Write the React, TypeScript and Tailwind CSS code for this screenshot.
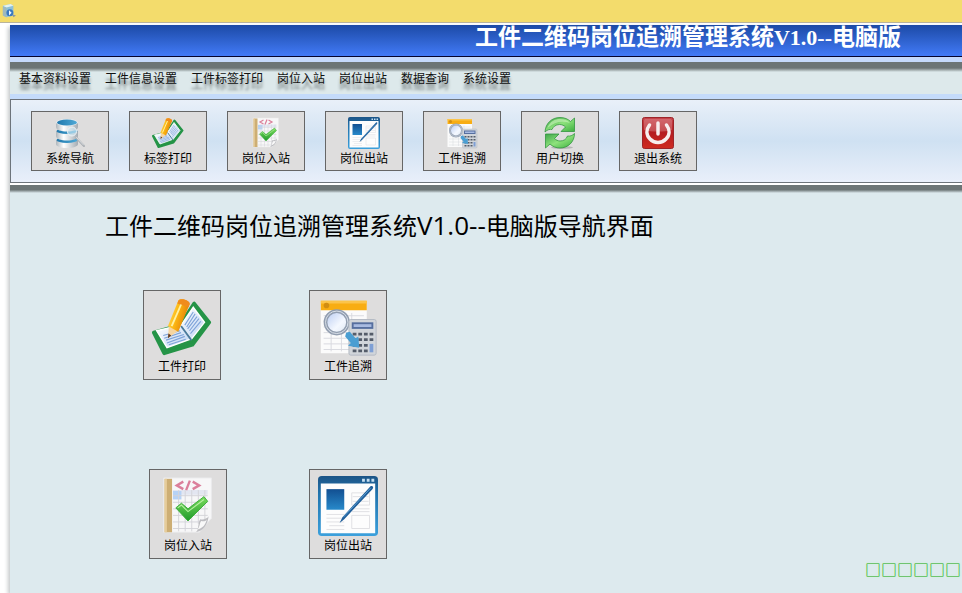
type IconProps = { className?: string };

function DatabaseIcon({ className }: IconProps) {
  return (
    <svg viewBox="0 0 64 64" className={className} aria-hidden="true">
      <defs>
        <linearGradient id="dbBody" x1="0" x2="1">
          <stop offset="0" stopColor="#aeb6bc" />
          <stop offset="0.35" stopColor="#ffffff" />
          <stop offset="1" stopColor="#a3abb2" />
        </linearGradient>
        <linearGradient id="dbTop" x1="0" x2="1">
          <stop offset="0" stopColor="#1f78ad" />
          <stop offset="1" stopColor="#4fa9d6" />
        </linearGradient>
      </defs>
      <path d="M4 46v8c0 5 10 8 22 8s22-3 22-8v-8z" fill="url(#dbBody)" />
      <ellipse cx="26" cy="46" rx="21" ry="6" fill="url(#dbTop)" />
      <path d="M4 28v10c0 6 10 9 22 9s22-3 22-9V28z" fill="url(#dbBody)" />
      <ellipse cx="26" cy="28" rx="21" ry="6" fill="url(#dbTop)" />
      <path d="M4 11v9c0 6 10 9 22 9s22-3 22-9v-9z" fill="url(#dbBody)" />
      <ellipse cx="26" cy="11" rx="22" ry="7" fill="#e8eef2" />
      <ellipse cx="26" cy="11" rx="20" ry="6" fill="url(#dbTop)" />
      <circle cx="36" cy="29" r="9" fill="#cfe8f4" fillOpacity="0.6" stroke="#eef3f6" strokeWidth="2" />
      <path d="M45 42l15 16" stroke="#a9aeb3" strokeWidth="4" strokeLinecap="round" />
      <path d="M45 41l14 15" stroke="#eceff1" strokeWidth="1.5" strokeLinecap="round" />
    </svg>
  );
}

function NotebookIcon({ className }: IconProps) {
  return (
    <svg viewBox="0 0 64 64" className={className} aria-hidden="true">
      <defs>
        <linearGradient id="pencil" x1="0" x2="1" y1="0" y2="0.4">
          <stop offset="0" stopColor="#ffe46a" />
          <stop offset="0.5" stopColor="#fdb913" />
          <stop offset="1" stopColor="#e07b06" />
        </linearGradient>
        <linearGradient id="page" x1="0" x2="1" y1="0" y2="1">
          <stop offset="0" stopColor="#ffffff" />
          <stop offset="1" stopColor="#bcd3f2" />
        </linearGradient>
      </defs>
      <path d="M2 38l11 22 30-9 18-24L45 7 30 30z" fill="#259447" stroke="#259447" strokeWidth="4" strokeLinejoin="round" />
      <path d="M5 36l26-6 10 15-25 9z" fill="url(#page)" stroke="#fff" strokeWidth="1.5" />
      <path d="M31 30L44 11l12 16-14 18z" fill="url(#page)" stroke="#fff" strokeWidth="1.5" />
      <g stroke="#7ea3d9" strokeWidth="1.2">
        <path d="M12 41l18-5M13 44l18-6M15 46l19-6M16 49l19-7M18 51l18-6" />
        <path d="M35 30l9-14M37 32l9-14M38 34l10-13M40 36l10-13M41 39l11-13" />
      </g>
      <path d="M31 31l11 15" stroke="#4a7a9c" strokeWidth="2" />
      <path d="M17 44l1-13 10 5z" fill="#f6d5a0" />
      <path d="M17 44l.5-5 3 2z" fill="#5b3520" />
      <path d="M17 31L28 4c2-4 13 0 12 4L28 37z" fill="url(#pencil)" />
      <path d="M28 4c3-4 14 0 12 4l-1 3-12-4z" fill="#f08c1c" />
      <path d="M21 31L31 8" stroke="#fff1a1" strokeWidth="2" />
    </svg>
  );
}

function CheckDocIcon({ className }: IconProps) {
  return (
    <svg viewBox="0 0 64 64" className={className} aria-hidden="true">
      <defs>
        <linearGradient id="check" x1="0" x2="0" y1="0" y2="1">
          <stop offset="0" stopColor="#7bdc5c" />
          <stop offset="1" stopColor="#1f9a2c" />
        </linearGradient>
      </defs>
      <path d="M6 2h51v43L44 60H6z" fill="#f7f7f8" stroke="#e9e9eb" />
      <path d="M7 3h8v57H7z" fill="#cdae74" />
      <path d="M7 3h2.5v57H7z" fill="#e6cd9b" />
      <path d="M16 15h37v5H16z" fill="#e3e6f1" />
      <path d="M16 16h9v9H16z" fill="#b6d2f6" />
      <path d="M16 21h37M16 28h37M16 35h37M16 42h37M16 49h29M16 56h27M22 15v44M29 15v44M36 15v44M43 15v36M50 15v33" stroke="#d3d3d9" strokeWidth="1" />
      <path d="M27 6l-7 4 7 4M34 5l-4 10M37 6l7 4-7 4" fill="none" stroke="#db7f9b" strokeWidth="2.5" />
      <path d="M19 34l6-5 7 6 17-13 4 5-21 21z" fill="url(#check)" stroke="#3bae39" strokeLinejoin="round" />
      <path d="M21 34l4-3 7 7 17-13" fill="none" stroke="#b4efa0" strokeWidth="1.2" />
      <path d="M40 60c4-2 2-9 5-14 3 1 7 0 9-3-1 9-6 16-14 17z" fill="#bdbdc1" />
      <path d="M42 57c3-3 2-6 4-9 3 1 5 0 6-2-1 6-5 10-10 11z" fill="#f9f9f9" />
    </svg>
  );
}

function WindowPenIcon({ className }: IconProps) {
  return (
    <svg viewBox="0 0 64 64" className={className} aria-hidden="true">
      <defs>
        <linearGradient id="frame" x1="0" x2="0" y1="0" y2="1">
          <stop offset="0" stopColor="#1d5486" />
          <stop offset="0.3" stopColor="#2174ae" />
          <stop offset="1" stopColor="#3ba0dc" />
        </linearGradient>
        <linearGradient id="tile" x1="0" x2="0" y1="0" y2="1">
          <stop offset="0" stopColor="#124f91" />
          <stop offset="1" stopColor="#2789ca" />
        </linearGradient>
      </defs>
      <rect width="64" height="64" rx="4" fill="url(#frame)" />
      <path d="M3 8h58v53H3z" fill="#fdfdfd" />
      <path d="M47 3h3v3h-3zM52 3h3v3h-3zM57 3h3v3h-3z" fill="#c6dff1" />
      <path d="M9 14h19v22H9z" fill="url(#tile)" />
      <g fill="none" stroke="#dfdfe2">
        <path d="M36 18h19v13H36zM36 42h19v14H36zM37 22h17M37 27h17M36 35h19M36 38h19" />
        <path d="M9 41h19M9 45h16M9 49h19M12 53h16M9 57h19" />
      </g>
      <path d="M23 50l3-6L56 11c2-1 4 1 2 3L28 46z" fill="#205f9b" />
      <path d="M27 44l29-31" stroke="#5c9ed0" strokeWidth="1" />
    </svg>
  );
}

function TraceIcon({ className }: IconProps) {
  return (
    <svg viewBox="0 0 64 64" className={className} aria-hidden="true">
      <defs>
        <linearGradient id="lens" x1="0" x2="1" y1="0" y2="1">
          <stop offset="0" stopColor="#b5c9f0" />
          <stop offset="0.6" stopColor="#f4f8ff" />
          <stop offset="1" stopColor="#dce6f2" />
        </linearGradient>
      </defs>
      <path d="M3 4h49v56H3z" fill="#fbfbfb" />
      <path d="M3 4h49v10H3z" fill="#f8ad13" />
      <path d="M3 4h49v3H3z" fill="#fbc44b" />
      <circle cx="9" cy="9" r="3" fill="#d18d12" />
      <path d="M6 20h43M6 26h43M6 32h43M6 38h43M6 44h43M6 50h43M6 56h43M14 17v41M25 17v41M36 17v41" stroke="#d7d9df" />
      <circle cx="20" cy="27" r="12" fill="url(#lens)" stroke="#929eb0" strokeWidth="4" />
      <circle cx="20" cy="27" r="12" fill="none" stroke="#dce2eb" strokeWidth="1" />
      <rect x="33" y="24" width="29" height="38" rx="2" fill="#d1d5da" stroke="#b2b9c2" />
      <path d="M36 27h23v7H36z" fill="#566f9f" />
      <path d="M38 29h19v3H38z" fill="#a8bbe1" />
      <g fill="#545c69">
        <path d="M37 38h4v3h-4zM43 38h4v3h-4zM49 38h4v3h-4zM55 38h4v3h-4z" />
        <path d="M37 44h4v3h-4zM43 44h4v3h-4zM49 44h4v3h-4zM55 44h4v3h-4z" />
        <path d="M37 50h4v3h-4zM43 50h4v3h-4zM49 50h4v3h-4z" />
        <path d="M37 56h4v3h-4zM43 56h4v3h-4zM49 56h4v3h-4z" />
      </g>
      <path d="M55 50h4v9h-4z" fill="#7e9fd5" />
      <path d="M30 38l4-1 6 7 3-2 1 12-12-2 3-3-6-7z" fill="#4a9ed2" />
    </svg>
  );
}

function RefreshIcon({ className }: IconProps) {
  return (
    <svg viewBox="0 0 64 64" className={className} aria-hidden="true">
      <defs>
        <linearGradient id="arrow" x1="0" x2="1" y1="0" y2="1">
          <stop offset="0" stopColor="#3da447" />
          <stop offset="0.5" stopColor="#8ee27c" />
          <stop offset="1" stopColor="#3aae3c" />
        </linearGradient>
      </defs>
      <ellipse cx="36" cy="61" rx="22" ry="3" fill="#b5b5b5" />
      <path d="M2 30C3 12 16 1 32 1c9 0 16 3 21 8l8-7v27H34l9-9c-3-3-7-5-12-5-8 0-13 5-15 10-4-1-9 0-14 5z" fill="url(#arrow)" stroke="#2c913b" strokeWidth="1.5" />
      <path d="M61 33c0 17-13 29-29 29-8 0-15-3-20-8l-9 8V34h27l-9 9c3 3 7 5 11 5 8 0 13-4 15-10 5 1 10-1 14-5z" fill="url(#arrow)" stroke="#2c913b" strokeWidth="1.5" />
      <path d="M7 22C12 8 22 4 32 4c9 0 15 3 20 8-14-5-30-4-45 10z" fill="#c1f0b2" fillOpacity="0.7" />
    </svg>
  );
}

function PowerIcon({ className }: IconProps) {
  return (
    <svg viewBox="0 0 64 64" className={className} aria-hidden="true">
      <defs>
        <linearGradient id="power" x1="0" x2="0" y1="0" y2="1">
          <stop offset="0" stopColor="#c9454c" />
          <stop offset="0.5" stopColor="#b51c20" />
          <stop offset="1" stopColor="#cf2b20" />
        </linearGradient>
      </defs>
      <rect x="1" y="1" width="62" height="62" rx="4" fill="url(#power)" stroke="#9d2529" strokeWidth="2" />
      <path d="M4 8c0-3 2-4 4-4h48c3 0 4 2 4 4v18C42 30 22 30 4 26z" fill="#fff" fillOpacity="0.2" />
      <path d="M15 16c-7 9-7 20 1 28 8 9 24 9 32 0 8-8 8-19 1-28" fill="none" stroke="#f7eeee" strokeWidth="7" strokeLinecap="round" />
      <path d="M32 12v22" stroke="#f7eeee" strokeWidth="7" strokeLinecap="round" />
    </svg>
  );
}

function AppIcon({ className }: IconProps) {
  return (
    <svg viewBox="0 0 16 16" className={className} aria-hidden="true">
      <path d="M1 2l9-2 3 2v11l-8 2-4-2z" fill="#8fc0d6" />
      <path d="M1 2l9-2 3 2-8 2z" fill="#e4f2ef" />
      <path d="M1 3l4 1v11l-4-2z" fill="#9fb9bd" />
      <circle cx="9" cy="10" r="4" fill="#3b79c0" />
      <path d="M8 7l3 3-3 3z" fill="#eef8ff" />
      <path d="M12 12l4 1-3 2z" fill="#8a97a0" />
    </svg>
  );
}

const menus = ["基本资料设置", "工件信息设置", "工件标签打印", "岗位入站", "岗位出站", "数据查询", "系统设置"];

const tools = [
  { title: "系统导航", Icon: DatabaseIcon },
  { title: "标签打印", Icon: NotebookIcon },
  { title: "岗位入站", Icon: CheckDocIcon },
  { title: "岗位出站", Icon: WindowPenIcon },
  { title: "工件追溯", Icon: TraceIcon },
  { title: "用户切换", Icon: RefreshIcon },
  { title: "退出系统", Icon: PowerIcon },
];

function NavButton({ title, Icon }: (typeof tools)[number]) {
  return (
    <button className="flex h-[90px] w-[78px] flex-col items-center border border-[#666] bg-[#dedddd] pt-1.5">
      <Icon className="h-[60px] w-[60px]" />
      <span className="text-xs leading-5">{title}</span>
    </button>
  );
}

export default function App() {
  return (
    <div className="flex min-h-screen flex-col bg-white font-['Open_Sans','Noto_Sans_CJK_SC',sans-serif] text-black">
      <div className="flex h-[23px] items-center border-b border-[#b9b49b] bg-[#f3dc6c] pl-0.5">
        <AppIcon className="h-3.5 w-3.5" />
      </div>

      <div className="ml-2.5 mt-0.5 flex flex-1 flex-col bg-[#ddeaee] shadow-[-2px_2px_4px_#c4c8ca]">
        <header>
          <div className="flex h-8 justify-end border-b border-[#05052e] bg-linear-to-b from-[#1c4aa6] to-[#427bf8] pr-[61px]">
            <h1 className="whitespace-nowrap font-['Noto_Sans_CJK_SC',sans-serif] text-[23px] font-bold leading-5 text-white">
              工件二维码岗位追溯管理系统<span className="font-['Liberation_Serif',serif] text-[22px] leading-5">V1.0--</span>电脑版
            </h1>
          </div>
          <div className="h-[5px] bg-[#c5dafc]"></div>
          <div className="h-2.5 bg-linear-to-b from-[#6c7576] from-60% to-[#dce8ea]"></div>
        </header>

        <nav className="flex h-[22px] gap-3.5 bg-[#dde9eb] pl-[9px]">
          {menus.map((menu) => (
            <button key={menu} className="h-3.5 whitespace-nowrap text-xs leading-3.5 text-[#111] text-shadow-[0_6px_3px_#6f7778]">{menu}</button>
          ))}
        </nav>
        <div className="h-[5px] bg-[#c4dbfa]"></div>

        <div className="flex gap-5 border border-r-0 border-[#6d747b] bg-linear-to-b from-[#e9f0f9] via-[#cfe1f2] to-[#e9effa] py-[11px] pl-5">
          {tools.map(({ title, Icon }) => (
            <button key={title} className="flex h-[60px] w-[78px] shrink-0 flex-col items-center border border-[#666] bg-[#dedddd] pt-[5px]">
              <Icon className="h-8 w-8" />
              <span className="text-xs leading-5">{title}</span>
            </button>
          ))}
        </div>
        <div className="h-0.5 bg-white"></div>
        <div className="h-2 bg-linear-to-b from-[#6c7576] from-60% to-[#ddeaee]"></div>

        <main className="flex flex-1 flex-col">
          <h2 className="mt-4 pl-[95px] text-2xl leading-8">
            工件二维码岗位追溯管理系统<span className="text-[26px] leading-8">V1.0--</span>电脑版导航界面
          </h2>
          <div className="mt-12 flex gap-[88px] pl-[133px]">
            <NavButton title="工件打印" Icon={NotebookIcon} />
            <NavButton title="工件追溯" Icon={TraceIcon} />
          </div>
          <div className="mt-[89px] flex gap-[82px] pl-[139px]">
            <NavButton title="岗位入站" Icon={CheckDocIcon} />
            <NavButton title="岗位出站" Icon={WindowPenIcon} />
          </div>
          <p className="mb-4 mt-auto pr-px text-right font-['Noto_Sans_CJK_SC',sans-serif] text-base leading-4 text-[#18a810] text-shadow-[0_0_2px_#b9ffb4]">□□□□□□</p>
        </main>
      </div>
    </div>
  );
}
